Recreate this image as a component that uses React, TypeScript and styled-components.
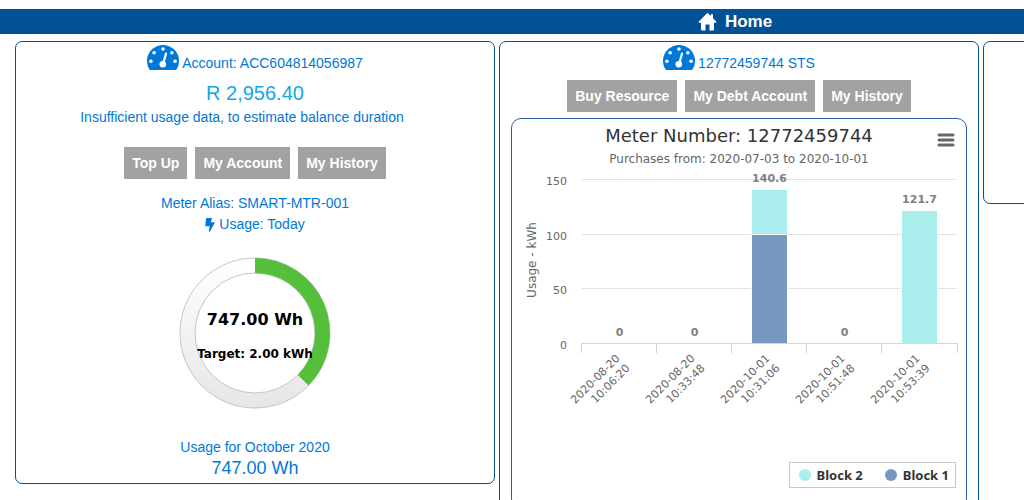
import React from 'react';
import styled, { createGlobalStyle } from 'styled-components';

const GlobalStyle = createGlobalStyle`
  html { scrollbar-width: none; }
  body {
    margin: 0;
    background: #ffffff;
    color: #0078d7;
    font-family: "Liberation Sans", Arial, sans-serif;
    font-size: 14px;
    overflow-x: hidden;
  }
  * { box-sizing: border-box; }
`;

const chartFont = '"DejaVu Sans", "Lucida Grande", sans-serif';
const legendFont = '"Noto Sans", "Lucida Grande", sans-serif';

const Page = styled.main`
  min-width: 1470px;
  padding-top: 9px;
`;

const HomeBar = styled.header`
  display: flex;
  justify-content: center;
  align-items: center;
  height: 25px;
  background: #005195;
`;

const HomeLink = styled.a`
  display: flex;
  align-items: center;
  gap: 8px;
  color: #ffffff;
  font-size: 17px;
  font-weight: bold;
  text-decoration: none;
`;

const Columns = styled.div`
  display: grid;
  grid-template-columns: repeat(3, minmax(480px, 1fr));
  align-items: start;
  gap: 4px;
  padding: 7px 7px 16px 15px;
`;

const Card = styled.section`
  display: flex;
  flex-direction: column;
  align-items: center;
  min-height: 163px;
  padding: 3px 11px 4px;
  border: 1px solid #00508a;
  border-radius: 7px;
`;

const CardHeading = styled.div`
  display: flex;
  align-items: flex-end;
  gap: 3px;
  height: 25px;
  margin-bottom: 3px;
  line-height: 14px;
`;

const Balance = styled.div`
  margin-top: 8px;
  color: #11a9e2;
  font-size: 20px;
  line-height: 24px;
`;

const Line = styled.div<{ $top?: number }>`
  display: flex;
  align-items: center;
  gap: 4px;
  margin-top: ${(p) => p.$top ?? 0}px;
  line-height: 21px;
`;

const Estimate = styled(Line)`
  padding-right: 26px;
`;

const Total = styled.div`
  font-size: 18px;
  line-height: 21px;
`;

const Actions = styled.div<{ $top: number }>`
  display: flex;
  gap: 8px;
  margin-top: ${(p) => p.$top}px;
`;

const ActionButton = styled.button`
  height: 32px;
  padding: 0 8px;
  border: 0;
  background: #a2a2a2;
  color: #ffffff;
  font-family: inherit;
  font-size: 14px;
  font-weight: bold;
  white-space: nowrap;
`;

const Gauge = styled.svg`
  display: block;
  width: 152px;
  height: 152px;
  margin: 22px 0 28px;
  overflow: visible;
  font-family: ${chartFont};
  font-weight: bold;
`;

const ChartFrame = styled.figure`
  align-self: stretch;
  position: relative;
  margin: 6px 0 8px;
  padding: 5px 0 20px;
  border: 1px solid #2a5f9e;
  border-radius: 10px;
  font-family: ${chartFont};
`;

const ChartTitle = styled.h2`
  margin: 0;
  color: #333333;
  font-size: 18px;
  font-weight: normal;
  line-height: 24px;
  text-align: center;
`;

const ChartSubtitle = styled.p`
  margin: 0;
  color: #666666;
  font-size: 12px;
  line-height: 22px;
  text-align: center;
`;

const MenuButton = styled.button`
  position: absolute;
  top: 12px;
  right: 9px;
  padding: 2px;
  border: 0;
  background: transparent;
  line-height: 0;
`;

const Plot = styled.svg`
  display: block;
  width: 100%;
`;

const Legend = styled.ul`
  display: flex;
  gap: 22px;
  width: fit-content;
  margin: 0 10px 0 auto;
  padding: 0 6px 0 9px;
  border: 1px solid #c8c8c8;
  list-style: none;
  color: #333333;
  font-family: ${legendFont};
  font-size: 13px;
  font-weight: bold;
  line-height: 24px;
`;

const LegendItem = styled.li<{ $color: string }>`
  display: flex;
  align-items: center;
  gap: 6px;
  &::before {
    content: "";
    width: 12px;
    height: 12px;
    border-radius: 50%;
    background: ${(p) => p.$color};
  }
`;

const MeterIcon = () => (
  <svg width="32" height="25" viewBox="0 0 32 25" aria-hidden="true">
    <path
      d="M3.6 25Q2.8 25 2.3 24.2A16 16 0 1 1 29.7 24.2Q29.2 25 28.4 25Z"
      fill="#0078d7"
    />
    <g fill="#ffffff">
      <circle cx="3.9" cy="16.3" r="1.8" />
      <circle cx="7.1" cy="7.7" r="1.8" />
      <circle cx="16" cy="4" r="1.8" />
      <circle cx="24.9" cy="7.7" r="1.8" />
      <circle cx="28.1" cy="16.3" r="1.8" />
      <circle cx="15.8" cy="19.3" r="3.3" />
    </g>
    <path d="M16.4 18L19 8.6" stroke="#ffffff" strokeWidth="2.2" strokeLinecap="round" />
  </svg>
);

const HomeIcon = () => (
  <svg width="19" height="18" viewBox="0 0 19 18" aria-hidden="true">
    <path
      d="M9 .2Q9.5 -.2 10 .2L12.8 3V1.2H15V5.2L18.2 8.6Q18.6 9.6 17.6 9.7H16V16.6Q16 17.4 15.2 17.4H11.5V11.6H7.5V17.4H3.8Q3 17.4 3 16.6V9.7H1.4Q.4 9.6 .8 8.6Z"
      fill="#ffffff"
    />
  </svg>
);

const BoltIcon = () => (
  <svg width="10" height="14" viewBox="0 0 10 14" aria-hidden="true">
    <path
      d="M1.7 0H6.4Q7.1 .1 6.9 .8L5.9 4.2H9.1Q9.9 4.4 9.5 5.2L4.9 13.6Q3.9 14.3 3.8 13.2L4.7 8.2H1Q.2 8.1 .3 7.3L1 .7Q1.1 .1 1.7 0Z"
      fill="#0078d7"
    />
  </svg>
);

const block1 = '#7798bf';
const block2 = '#aaeeee';

const purchases = [
  { date: '2020-08-20', time: '10:06:20', low: 0, high: 0, label: '0' },
  { date: '2020-08-20', time: '10:33:48', low: 0, high: 0, label: '0' },
  { date: '2020-10-01', time: '10:31:06', low: 100, high: 40.6, label: '140.6' },
  { date: '2020-10-01', time: '10:51:48', low: 0, high: 0, label: '0' },
  { date: '2020-10-01', time: '10:53:39', low: 0, high: 121.7, label: '121.7' },
];

const left = 69;
const right = 445;
const base = 173;
const perUnit = 1.095;
const barTop = (total: number) => Math.round(base - total * perUnit) + 0.5;

const PurchaseChart = () => (
  <Plot viewBox="0 0 454 292" role="img" aria-label="Usage per purchase in kWh">
    {[0, 50, 100, 150].map((v) => {
      const y = Math.round(base - v * perUnit) + 0.5;
      return (
        <g key={v}>
          <path d={`M${left + 1} ${y}H${right}`} stroke="#e2e2e2" />
          <text x="55" y={y + 5} fontSize="11" fill="#666666" textAnchor="end">{v}</text>
        </g>
      );
    })}
    <text transform="translate(24 90) rotate(-90)" fontSize="12" fill="#666666" textAnchor="middle">
      Usage - kWh
    </text>
    {[69.5, 144.5, 219.5, 294.5, 369.5, 445.5].map((x) => (
      <path key={x} d={`M${x} ${base}v10`} stroke="#ccd6eb" />
    ))}
    {purchases.map((p, i) => {
      const x = left + 38.5 + i * 75;
      const total = p.low + p.high;
      const floor = p.low > 0 ? barTop(p.low) : base + 0.5;
      return (
        <g key={p.time}>
          {p.high > 0 && (
            <rect x={x - 18} y={barTop(total)} width="36" height={floor - barTop(total)} fill={block2} stroke="#ffffff" />
          )}
          {p.low > 0 && (
            <rect x={x - 18} y={barTop(p.low)} width="36" height={base + 0.5 - barTop(p.low)} fill={block1} stroke="#ffffff" />
          )}
          <text
            x={x}
            y={Math.round(base - total * perUnit) - 7}
            fontSize="11"
            fontWeight="bold"
            fill="#808080"
            textAnchor="middle"
          >
            {p.label}
          </text>
          <g transform={`translate(${x + 1} 189) rotate(-45)`} fontSize="11" fill="#666666" textAnchor="end">
            <text x="0" y="0">{p.date}</text>
            <text x="0" y="14">{p.time}</text>
          </g>
        </g>
      );
    })}
    <path d={`M${left} ${base + 0.5}H${right + 1}`} stroke="#ccd6eb" />
  </Plot>
);

export default function App() {
  return (
    <>
      <GlobalStyle />
      <Page>
        <HomeBar>
          <HomeLink href="#"><HomeIcon />Home</HomeLink>
        </HomeBar>
        <Columns>
          <Card>
            <CardHeading><MeterIcon />Account: ACC604814056987</CardHeading>
            <Balance>R 2,956.40</Balance>
            <Estimate $top={2}>Insufficient usage data, to estimate balance duration</Estimate>
            <Actions $top={19}>
              <ActionButton>Top Up</ActionButton>
              <ActionButton>My Account</ActionButton>
              <ActionButton>My History</ActionButton>
            </Actions>
            <Line $top={14}>Meter Alias: SMART-MTR-001</Line>
            <Line><BoltIcon />Usage: Today</Line>
            <Gauge viewBox="0 0 152 152" role="img" aria-label="Usage against target">
              <defs>
                <linearGradient id="ring" x1="0" y1="0" x2="0" y2="1">
                  <stop offset="0" stopColor="#ffffff" />
                  <stop offset="1" stopColor="#e6e6e6" />
                </linearGradient>
              </defs>
              <circle cx="76" cy="76" r="75" fill="url(#ring)" stroke="#c4c4c4" />
              <circle cx="76" cy="76" r="60" fill="#ffffff" stroke="#c4c4c4" />
              <path d="M76 1A75 75 0 0 1 129.6 128.5L118.9 118A60 60 0 0 0 76 16Z" fill="#55bf3b" />
              <text x="76" y="68" fontSize="16" textAnchor="middle">747.00 Wh</text>
              <text x="76" y="101" fontSize="12" textAnchor="middle">Target: 2.00 kWh</text>
            </Gauge>
            <Line>Usage for October 2020</Line>
            <Total>747.00 Wh</Total>
          </Card>
          <Card>
            <CardHeading><MeterIcon />12772459744 STS</CardHeading>
            <Actions $top={7}>
              <ActionButton>Buy Resource</ActionButton>
              <ActionButton>My Debt Account</ActionButton>
              <ActionButton>My History</ActionButton>
            </Actions>
            <ChartFrame>
              <ChartTitle>Meter Number: 12772459744</ChartTitle>
              <ChartSubtitle>Purchases from: 2020-07-03 to 2020-10-01</ChartSubtitle>
              <MenuButton aria-label="Chart menu">
                <svg width="18" height="14" viewBox="0 0 18 14">
                  <path d="M2 2H16M2 7H16M2 12H16" stroke="#666666" strokeWidth="3" strokeLinecap="round" />
                </svg>
              </MenuButton>
              <PurchaseChart />
              <Legend>
                <LegendItem $color={block2}>Block 2</LegendItem>
                <LegendItem $color={block1}>Block 1</LegendItem>
              </Legend>
            </ChartFrame>
          </Card>
          <Card />
        </Columns>
      </Page>
    </>
  );
}
